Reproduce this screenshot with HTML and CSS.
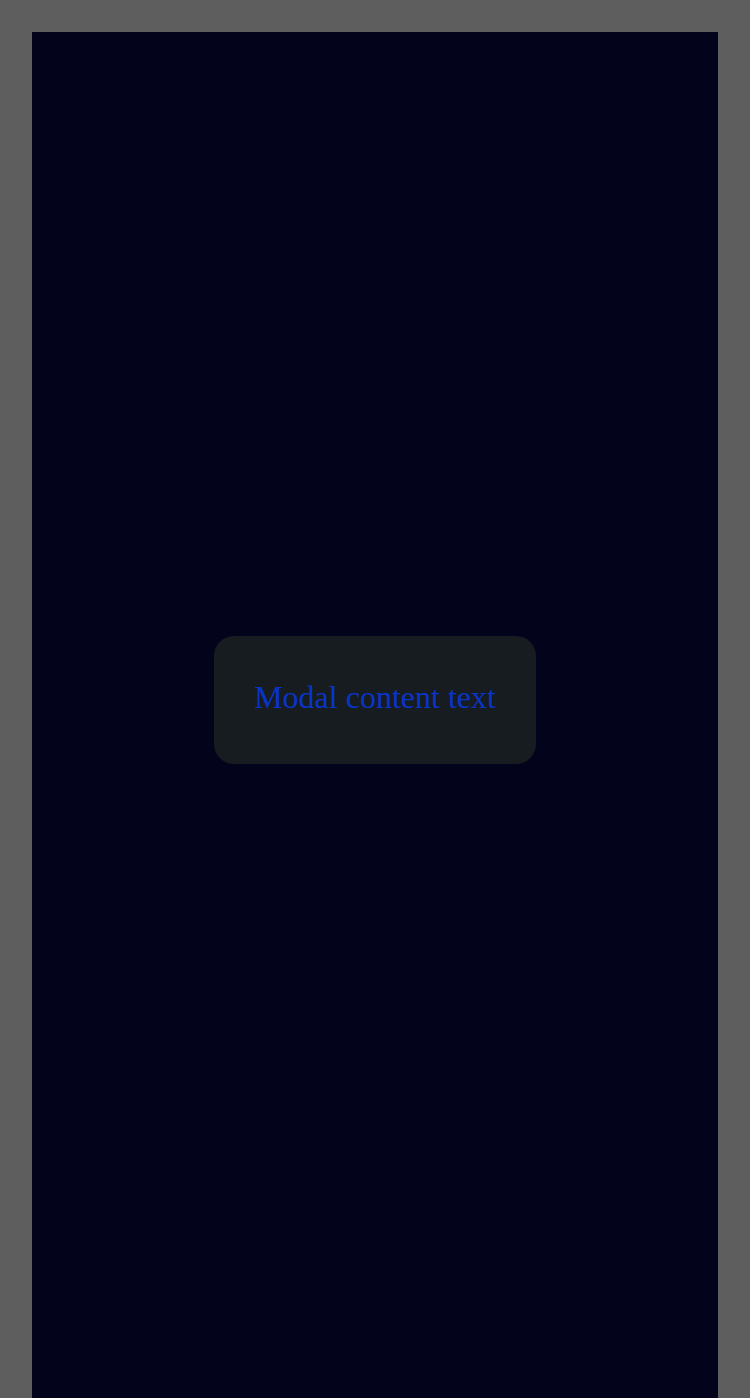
FILE: index.html
```html
<!DOCTYPE html>
<html lang="en">
<head>
<meta charset="utf-8">
<title>Modal</title>
<link rel="stylesheet" href="styles.css">
</head>
<body>
<main class="panel">
  <div class="modal" role="dialog">
    <p class="modal-text">Modal content text</p>
  </div>
</main>
</body>
</html>
```

FILE: styles.css
```css
html, body {
  margin: 0;
  padding: 0;
}
body {
  background: #5e5e5e;
  padding: 32px 32px 0;
  font-family: "Liberation Serif", "Times New Roman", serif;
}
.panel {
  background: #03031c;
  min-height: 1400px;
}
.modal {
  position: fixed;
  left: calc(50% - 161px);
  top: calc(50% - 63px);
  background: #161c1f;
  border-radius: 20px;
  padding: 43px 40px 48px;
  box-sizing: border-box;
  width: 322px;
  height: 128px;
}
.modal-text {
  margin: 0;
  font-size: 32px;
  line-height: 37px;
  color: #0a34c8;
  text-align: center;
  white-space: nowrap;
}
```
